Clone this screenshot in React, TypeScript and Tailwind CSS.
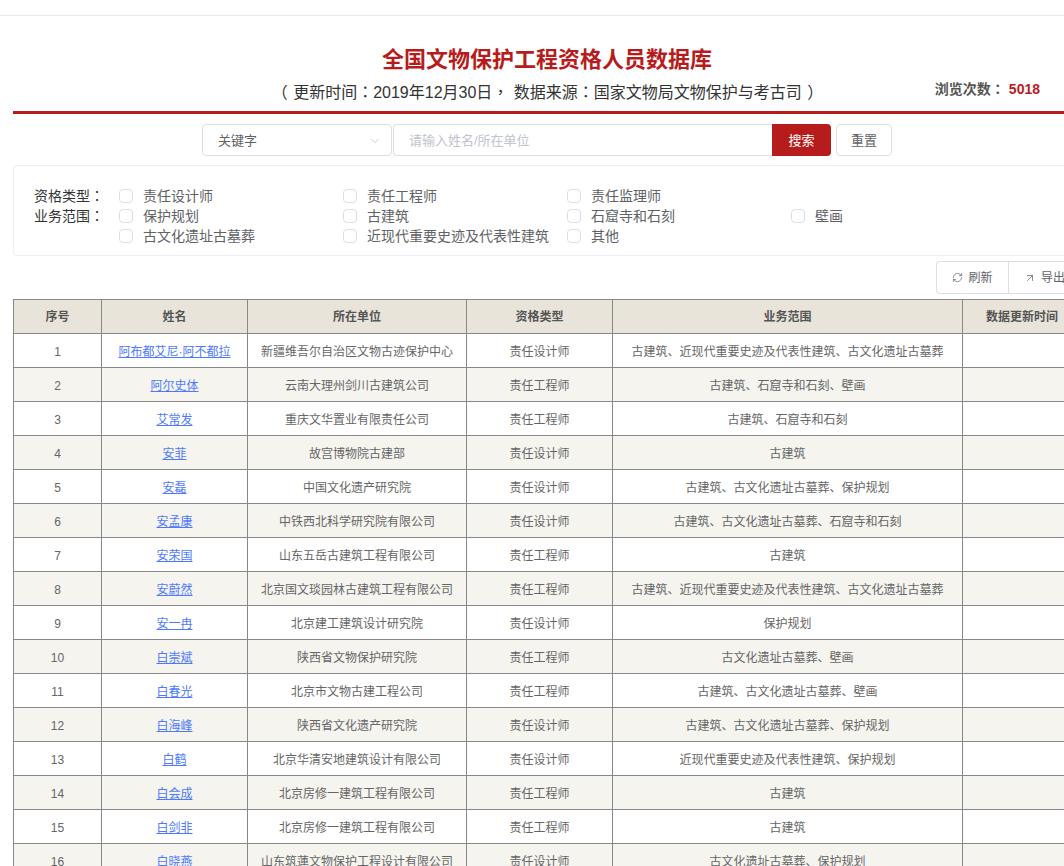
import { ChevronDown, RefreshCw, ArrowUpRight } from 'lucide-react'

const rows = [
    ['阿布都艾尼·阿不都拉', '新疆维吾尔自治区文物古迹保护中心', '责任设计师', '古建筑、近现代重要史迹及代表性建筑、古文化遗址古墓葬'],
    ['阿尔史体', '云南大理州剑川古建筑公司', '责任工程师', '古建筑、石窟寺和石刻、壁画'],
    ['艾常发', '重庆文华置业有限责任公司', '责任工程师', '古建筑、石窟寺和石刻'],
    ['安菲', '故宫博物院古建部', '责任设计师', '古建筑'],
    ['安磊', '中国文化遗产研究院', '责任设计师', '古建筑、古文化遗址古墓葬、保护规划'],
    ['安孟康', '中铁西北科学研究院有限公司', '责任设计师', '古建筑、古文化遗址古墓葬、石窟寺和石刻'],
    ['安荣国', '山东五岳古建筑工程有限公司', '责任工程师', '古建筑'],
    ['安蔚然', '北京国文琰园林古建筑工程有限公司', '责任工程师', '古建筑、近现代重要史迹及代表性建筑、古文化遗址古墓葬'],
    ['安一冉', '北京建工建筑设计研究院', '责任设计师', '保护规划'],
    ['白崇斌', '陕西省文物保护研究院', '责任工程师', '古文化遗址古墓葬、壁画'],
    ['白春光', '北京市文物古建工程公司', '责任工程师', '古建筑、古文化遗址古墓葬、壁画'],
    ['白海峰', '陕西省文化遗产研究院', '责任设计师', '古建筑、古文化遗址古墓葬、保护规划'],
    ['白鹤', '北京华清安地建筑设计有限公司', '责任设计师', '近现代重要史迹及代表性建筑、保护规划'],
    ['白会成', '北京房修一建筑工程有限公司', '责任工程师', '古建筑'],
    ['白剑非', '北京房修一建筑工程有限公司', '责任工程师', '古建筑'],
    ['白晓燕', '山东筑蓮文物保护工程设计有限公司', '责任设计师', '古文化遗址古墓葬、保护规划'],
]

const filters = [
    { label: '资格类型', items: ['责任设计师', '责任工程师', '责任监理师'] },
    { label: '业务范围', items: ['保护规划', '古建筑', '石窟寺和石刻', '壁画'] },
    { label: '', items: ['古文化遗址古墓葬', '近现代重要史迹及代表性建筑', '其他'] },
]

const headers = ['序号', '姓名', '所在单位', '资格类型', '业务范围', '数据更新时间']

// full-width punctuation sits centred in the cell in the TC font
function Punct({ children }: { children: string }) {
    return <span className="font-['Noto_Sans_CJK_TC',sans-serif]">{children}</span>
}

export default function App() {
    return (
        <div className="h-[866px] w-[1064px] overflow-hidden bg-white font-['Liberation_Sans','Noto_Sans_CJK_SC',sans-serif] text-[#666]">
            <div className="ml-[13px] w-[1068px]">
                <div className="-ml-[13px] mt-[15px] h-px w-[1081px] bg-[#e8e8f0]" />

                <h1 className="mt-[28px] text-center text-[22px] leading-[32px] font-bold text-[#b71c1c]">
                    全国文物保护工程资格人员数据库
                </h1>
                <div className="mt-[3px] grid h-[24px] grid-cols-[1fr_auto_1fr]">
                    <div />
                    <p className="pl-[1px] text-[16px] leading-[24px] text-[#333] [word-spacing:1px]">
                        <Punct>（</Punct> 更新时间<Punct>：</Punct>2019年12月30日<Punct>，</Punct> 数据来源<Punct>：</Punct>国家文物局文物保护与考古司 ）
                    </p>
                    <div className="justify-self-end pr-[41px] text-[14px] leading-[18px] font-bold whitespace-nowrap text-[#555]">
                        浏览次数<Punct>：</Punct><span className="ml-[4px] text-[#b71c1c]">5018</span>
                    </div>
                </div>
                <div className="mt-[8px] h-[3px] bg-[#b71c1c]" />

                <div className="mt-[10px] ml-[189px] flex h-[32px] text-[13px]">
                    <div className="flex w-[190px] items-center justify-between rounded border border-[#dcdfe6] pt-px pr-[9px] pl-[15px] text-[#606266]">
                        关键字
                        <ChevronDown className="h-[14px] w-[14px] text-[#c0c4cc]" strokeWidth={1.5} />
                    </div>
                    <div className="ml-px flex w-[379px] items-center rounded-l border border-r-0 border-[#dcdfe6] pt-px pl-[15px] text-[#c0c4cc]">
                        请输入姓名/所在单位
                    </div>
                    <div className="flex w-[59px] items-center justify-center rounded-r bg-[#b71c1c] pt-px text-white">搜索</div>
                    <div className="ml-[5px] flex w-[56px] items-center justify-center rounded border border-[#dcdfe6] pt-px text-[#606266]">重置</div>
                </div>

                <div className="mt-[9px] flex h-[91px] flex-col justify-center rounded border border-[#ebeef5] pt-[11px] pl-[20px] text-[14px]">
                    {filters.map((row, i) => (
                        <div key={i} className="flex h-[20px] items-center">
                            <div className="w-[85px] pb-px text-[#333]">
                                {row.label}
                                {row.label && <Punct>：</Punct>}
                            </div>
                            {row.items.map((item) => (
                                <div key={item} className="flex w-[224px] items-center">
                                    <span className="h-[14px] w-[14px] rounded-sm border border-[#dcdfe6]" />
                                    <span className="ml-[10px] text-[#606266]">{item}</span>
                                </div>
                            ))}
                        </div>
                    ))}
                </div>

                <div className="mt-[5px] ml-[923px] flex h-[33px] w-[145px] rounded-l border border-r-0 border-[#dcdfe6] text-[12px] text-[#606266]">
                    <div className="flex w-[72px] items-center justify-center gap-[5px] border-r border-[#dcdfe6]">
                        <RefreshCw className="h-[11px] w-[11px]" strokeWidth={1.5} />
                        刷新
                    </div>
                    <div className="flex items-center gap-[5px] pl-[15px] whitespace-nowrap">
                        <ArrowUpRight className="h-[12px] w-[12px]" strokeWidth={1.5} />
                        导出
                    </div>
                </div>

                <table className="mt-[5px] w-[1068px] table-fixed border-collapse border border-[#888] text-center text-[12px]">
                    <colgroup>
                        <col className="w-[88px]" />
                        <col className="w-[146px]" />
                        <col className="w-[219px]" />
                        <col className="w-[146px]" />
                        <col className="w-[350px]" />
                        <col className="w-[119px]" />
                    </colgroup>
                    <thead>
                        <tr className="h-[34px] bg-[#e8e4da]">
                            {headers.map((h) => (
                                <th key={h} className="border border-[#888] p-0 pt-px font-bold text-[#555]">{h}</th>
                            ))}
                        </tr>
                    </thead>
                    <tbody>
                        {rows.map((r, i) => (
                            <tr key={i} className={`h-[34px] ${i % 2 === 1 ? 'bg-[#f5f4ef]' : 'bg-white'}`}>
                                <td className="border border-[#888] p-0 pt-[2px]">{i + 1}</td>
                                <td className="border border-[#888] p-0 pt-[2px]">
                                    <a className="text-[#4d79ff] underline">{r[0]}</a>
                                </td>
                                <td className="border border-[#888] p-0 pt-[2px]">{r[1]}</td>
                                <td className="border border-[#888] p-0 pt-[2px]">{r[2]}</td>
                                <td className="border border-[#888] p-0 pt-[2px]">{r[3]}</td>
                                <td className="border border-[#888] p-0" />
                            </tr>
                        ))}
                    </tbody>
                </table>
            </div>
        </div>
    )
}
